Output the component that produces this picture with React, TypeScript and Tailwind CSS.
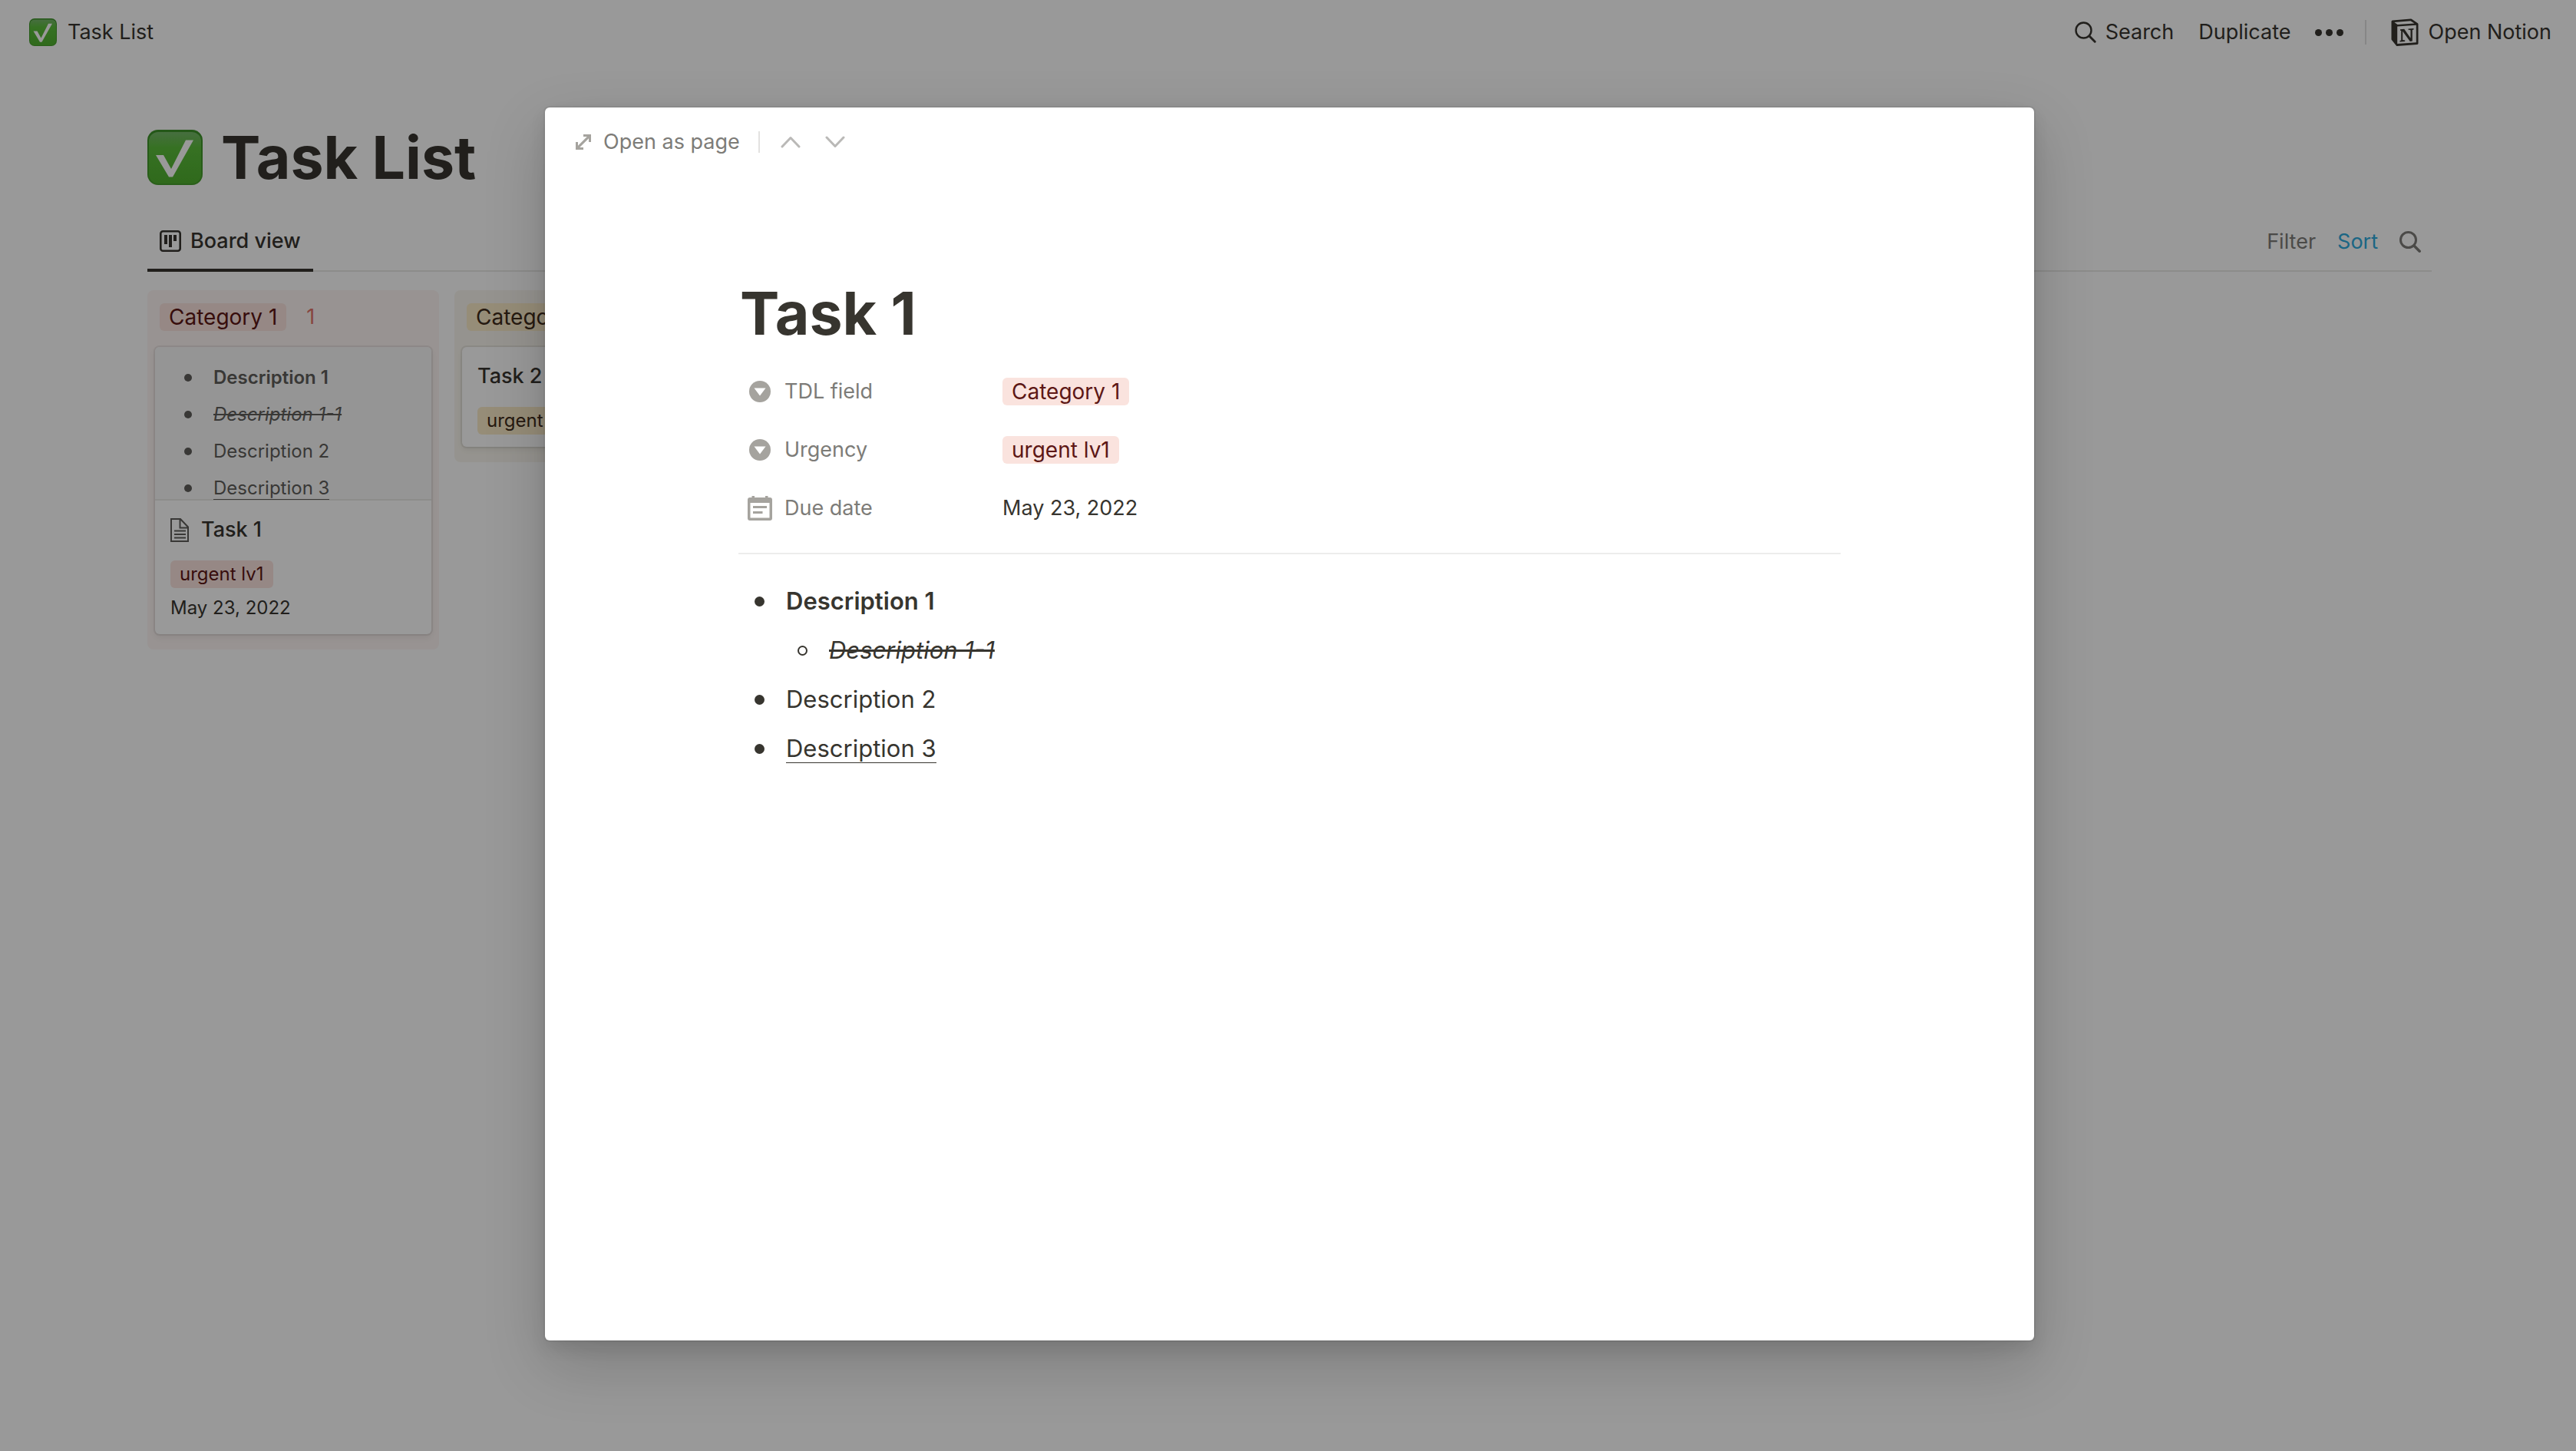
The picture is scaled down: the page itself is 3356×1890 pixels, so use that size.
import type { ReactNode } from "react";

function CheckMark({ className }: { className: string }) {
  return (
    <svg viewBox="0 0 72 72" className={className} aria-hidden="true">
      <defs>
        <linearGradient id="tile" x1="0" y1="0" x2="0" y2="1">
          <stop offset="0" stopColor="#76b86a" />
          <stop offset="0.3" stopColor="#5bbd3b" />
          <stop offset="1" stopColor="#50b02f" />
        </linearGradient>
        <linearGradient id="rim" x1="0" y1="0" x2="0" y2="1">
          <stop offset="0" stopColor="#3c9228" />
          <stop offset="1" stopColor="#479f2c" />
        </linearGradient>
      </defs>
      <rect width="72" height="72" rx="14" fill="url(#rim)" />
      <rect x="2" y="3" width="68" height="67" rx="12" fill="url(#tile)" />
      <path d="M11 33h10l10 18L50 13.500h10L33 61.500h-5z" fill="#fff" />
    </svg>
  );
}

function SearchIcon({ className, stroke }: { className: string; stroke: number }) {
  return (
    <svg viewBox="0 0 28 28" className={className} fill="none" stroke="currentColor" strokeWidth={stroke} strokeLinecap="round" aria-hidden="true">
      <circle cx="11.500" cy="11.500" r="10" />
      <path d="M19 19l7.200 7.200" strokeWidth={stroke + 0.5} />
    </svg>
  );
}

function NotionLogo() {
  return (
    <svg viewBox="0 0 36 36" className="size-9" strokeLinejoin="round" aria-hidden="true">
      <path d="M2 4L26 2L34 7.500V32.500L8 34.500L2 27z" fill="#37352f" stroke="#37352f" strokeWidth="3" />
      <path d="M4.300 5L25.500 3.300L30.500 6.500L8.500 8z" fill="#fff" />
      <path d="M8.200 10.500L32.800 8.800V31.300L8.200 33z" fill="#fff" />
      <path d="M12 14.200L17.200 13.800L25.500 25.800V15.300L22.500 14.800V13.400L29.500 13V14.400L27.800 15V29.600L24.800 30L15.200 16.700V28L18.200 28.500V30L11.500 30.500V29.100L13.200 28.400V16L12 15.700z" fill="#37352f" />
    </svg>
  );
}

function BoardIcon() {
  return (
    <svg viewBox="0 0 28 28" className="size-7" aria-hidden="true">
      <rect x="1.300" y="1.300" width="25.400" height="25.400" rx="3" fill="none" stroke="currentColor" strokeWidth="2.600" />
      <path d="M6 6h4v12H6zM12 6h4v16h-4zM18 6h4v8h-4z" fill="currentColor" />
    </svg>
  );
}

function PageIcon() {
  return (
    <svg viewBox="0 0 24 31" className="h-[31px] w-6 text-[#5f5e5b]" fill="none" stroke="currentColor" strokeWidth="2" aria-hidden="true">
      <path d="M1 1h12l10 10.500V30H1zM12.500 1v11.500H23M5 16.500h15M5 21h15M5 25.500h15" />
    </svg>
  );
}

function ExpandIcon() {
  return (
    <svg viewBox="0 0 20 20" className="size-5 text-[#a5a39e]" aria-hidden="true">
      <path d="M10 0h10v10h-3V5.200L5.200 17H10v3H0V10h3v4.800L14.800 3H10z" fill="currentColor" />
    </svg>
  );
}

function Chevron({ up }: { up?: boolean }) {
  return (
    <svg viewBox="0 0 26 16" className="h-4 w-[26px] text-[#bab9b7]" fill="none" stroke="currentColor" strokeWidth="3" strokeLinecap="round" strokeLinejoin="round" aria-hidden="true">
      <path d={up ? "M2 14L13 2.500L24 14" : "M2 2L13 13.500L24 2"} />
    </svg>
  );
}

function SelectIcon() {
  return (
    <svg viewBox="0 0 28 28" className="size-7" aria-hidden="true">
      <circle cx="14" cy="14" r="14" fill="#a5a39e" />
      <path d="M6.500 9.500h15L14 19.500z" fill="#fff" />
    </svg>
  );
}

function DateIcon() {
  return (
    <svg viewBox="0 0 32 32" className="size-8" aria-hidden="true">
      <path fill="#a5a39e" fillRule="evenodd" d="M5.500 0h3.500v2h14V0h3.500v2H29a3 3 0 0 1 3 3v24a3 3 0 0 1-3 3H3a3 3 0 0 1-3-3V5a3 3 0 0 1 3-3h2.500zM3.500 9v19.500h25V9z" />
      <path fill="#a5a39e" d="M7 13h18v3H7zM7 20h12.500v3H7z" />
    </svg>
  );
}

const red = "bg-[#fae3de] text-[#5d1715]";
const yellow = "bg-[#faebc8] text-[#402c1b]";

function Tag({ tone, size, children }: { tone: string; size: string; children: ReactNode }) {
  return (
    <span className={`inline-flex h-9 items-center whitespace-nowrap rounded-md px-3 ${size} ${tone}`}>
      {children}
    </span>
  );
}

function Column({ name, tone, tint, count, countColor, children }: { name: string; tone: string; tint: string; count: number; countColor: string; children: ReactNode }) {
  return (
    <section className={`w-[380px] shrink-0 rounded-lg px-[10px] pt-4 pb-5 ${tint}`}>
      <h2 className="flex h-[38px] items-center gap-[26px] pl-[6px]">
        <Tag tone={tone} size="text-[28px]">{name}</Tag>
        <span className={countColor}>{count}</span>
      </h2>
      <div className="mt-5">{children}</div>
    </section>
  );
}

const cardShadow = "rounded-md bg-white shadow-[0_0_0_2px_rgba(15,15,15,0.07),0_4px_8px_rgba(15,15,15,0.07)]";

function PreviewItem({ children }: { children: ReactNode }) {
  return (
    <li className="flex h-12 items-center">
      <span className="mr-7 size-[10px] rounded-full bg-[#5f5e5b]" />
      {children}
    </li>
  );
}

function Property({ icon, label, children }: { icon: ReactNode; label: string; children: ReactNode }) {
  return (
    <div className="flex h-[76px] items-center">
      <dt className="flex w-[344px] items-center gap-4 pl-3 text-[#7d7c78]">
        <span className="flex w-8 justify-center">{icon}</span>
        {label}
      </dt>
      <dd className="flex items-center">{children}</dd>
    </div>
  );
}

function Bullet() {
  return <span className="mr-7 size-[13px] rounded-full bg-[#37352f]" />;
}

export default function App() {
  return (
    <div className="relative min-h-screen overflow-hidden bg-white font-[Inter,sans-serif] text-[27px] leading-9 text-[#37352f]">
      <header className="flex h-[84px] items-center justify-between pr-8 pl-[38px]">
        <a href="#list" className="flex items-center gap-[14px]">
          <CheckMark className="size-9" />
          Task List
        </a>
        <nav className="flex items-center">
          <button className="mr-8 flex items-center gap-3">
            <SearchIcon className="size-7" stroke={2.4} />
            Search
          </button>
          <button className="mr-8">Duplicate</button>
          <button aria-label="More" className="mr-7 flex gap-[5px]">
            <span className="size-[9px] rounded-full bg-[#37352f]" />
            <span className="size-[9px] rounded-full bg-[#37352f]" />
            <span className="size-[9px] rounded-full bg-[#37352f]" />
          </button>
          <span className="mr-8 h-8 w-[2px] bg-[#e0e0df]" />
          <a href="#notion" className="flex items-center gap-3">
            <NotionLogo />
            Open Notion
          </a>
        </nav>
      </header>

      <main id="list" className="pt-[73px] pr-[188px] pl-48">
        <h1 className="flex h-24 items-center gap-6 text-[77px] leading-[96px] font-bold">
          <CheckMark className="size-[72px]" />
          Task List
        </h1>

        <div className="mt-[25px] flex h-[76px] items-stretch justify-between border-b-2 border-[#e9e9e7]">
          <button className="-mb-[2px] flex items-center gap-3 border-b-4 border-[#37352f] px-4 font-medium">
            <BoardIcon />
            Board view
          </button>
          <div className="flex items-center gap-7 pr-[14px] text-[#7d7c78]">
            <button>Filter</button>
            <button className="text-[#2eaadc]">Sort</button>
            <button aria-label="Search tasks">
              <SearchIcon className="size-7" stroke={3} />
            </button>
          </div>
        </div>

        <div className="mt-6 flex items-start gap-5">
          <Column name="Category 1" tone={red} tint="bg-[#fdf5f3]" count={1} countColor="text-[#e2736a]">
            <article className={cardShadow}>
              <ul className="h-[200px] overflow-hidden rounded-t-md bg-[#f9f9f8] pt-4 pl-[38px] text-2xl text-[#5f5e5b] shadow-[inset_0_-2px_0_#e9e9e7]">
                <PreviewItem><strong className="font-semibold">Description 1</strong></PreviewItem>
                <PreviewItem><em className="line-through">Description 1-1</em></PreviewItem>
                <PreviewItem>Description 2</PreviewItem>
                <PreviewItem><span className="border-b border-current leading-7">Description 3</span></PreviewItem>
              </ul>
              <div className="px-5 pt-[18px] pb-4">
                <h3 className="flex h-10 items-center gap-4 font-medium">
                  <PageIcon />
                  Task 1
                </h3>
                <div className="mt-5 flex"><Tag tone={red} size="text-2xl">urgent lv1</Tag></div>
                <p className="mt-2 text-2xl leading-9">May 23, 2022</p>
              </div>
            </article>
          </Column>
          <Column name="Category 2" tone={yellow} tint="bg-[#f9f6ee]" count={1} countColor="text-[#c29343]">
            <article className={cardShadow}>
              <div className="px-5 pt-[18px] pb-4">
                <h3 className="h-10 leading-10 font-medium">Task 2</h3>
                <div className="mt-5 flex"><Tag tone={yellow} size="text-2xl">urgent lv2</Tag></div>
              </div>
            </article>
          </Column>
        </div>
      </main>

      <div className="absolute inset-0 flex justify-center bg-black/40 pt-[140px] pr-12 pb-36 pl-[52px]">
        <div role="dialog" aria-label="Task 1" className="w-full max-w-[1940px] rounded-md bg-white shadow-[0_0_0_2px_rgba(15,15,15,0.05),0_10px_20px_rgba(15,15,15,0.1),0_30px_80px_rgba(15,15,15,0.2)]">
          <div className="flex h-[90px] items-center pl-10">
            <button className="flex items-center gap-4 text-[#7d7c78]">
              <ExpandIcon />
              Open as page
            </button>
            <span className="mr-[27px] ml-6 h-7 w-[2px] bg-[#e3e2e0]" />
            <button aria-label="Previous task" className="mr-8"><Chevron up /></button>
            <button aria-label="Next task"><Chevron /></button>
          </div>

          <div className="px-[252px] pt-[130px]">
            <h2 className="pl-[2px] text-[77px] leading-[96px] font-bold">Task 1</h2>
            <dl className="mt-4 border-b-2 border-[#ededec] pb-5">
              <Property icon={<SelectIcon />} label="TDL field"><Tag tone={red} size="text-[28px]">Category 1</Tag></Property>
              <Property icon={<SelectIcon />} label="Urgency"><Tag tone={red} size="text-[28px]">urgent lv1</Tag></Property>
              <Property icon={<DateIcon />} label="Due date">May 23, 2022</Property>
            </dl>
            <ul className="mt-[29px] pl-[21px] text-[31px] leading-[64px]">
              <li>
                <div className="flex h-16 items-center"><Bullet /><strong className="font-semibold">Description 1</strong></div>
                <ul className="pl-14">
                  <li className="flex h-16 items-center">
                    <span className="mr-7 size-[13px] rounded-full border-2 border-[#37352f]" />
                    <em className="line-through">Description 1-1</em>
                  </li>
                </ul>
              </li>
              <li className="flex h-16 items-center"><Bullet />Description 2</li>
              <li className="flex h-16 items-center"><Bullet /><span className="border-b border-current leading-9">Description 3</span></li>
            </ul>
          </div>
        </div>
      </div>
    </div>
  );
}
